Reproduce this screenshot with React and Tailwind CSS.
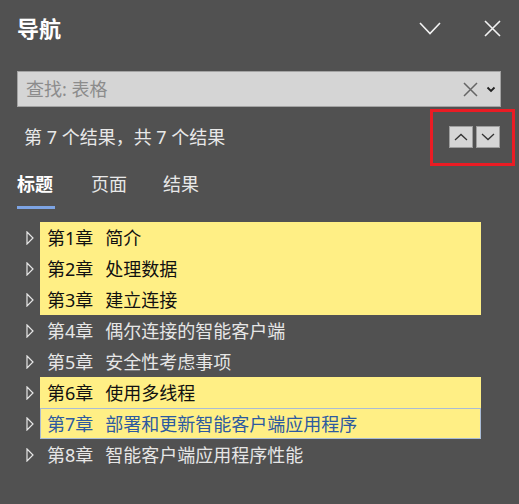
import React from 'react';

const FONT = { fontFamily: '"Segoe UI", "Noto Sans", "Noto Sans CJK SC", sans-serif' };

const chapters = [
  { num: '第1章', title: '简介', hit: true },
  { num: '第2章', title: '处理数据', hit: true },
  { num: '第3章', title: '建立连接', hit: true },
  { num: '第4章', title: '偶尔连接的智能客户端' },
  { num: '第5章', title: '安全性考虑事项' },
  { num: '第6章', title: '使用多线程', hit: true },
  { num: '第7章', title: '部署和更新智能客户端应用程序', hit: true, current: true },
  { num: '第8章', title: '智能客户端应用程序性能' },
];

function Caret() {
  return (
    <svg width="8" height="14" viewBox="0 0 8 14" className="block">
      <path d="M1 1 L7 7 L1 13 Z" fill="none" stroke="#e6e6e6" strokeWidth="1.2" strokeLinejoin="miter" />
    </svg>
  );
}

function Row({ num, title, hit, current }) {
  let box = 'text-[#e6e6e6]';
  if (hit) box = 'bg-[#ffef85] text-[#111]';
  if (current) box = 'bg-[#ffef85] text-[#2d5aa0] outline outline-1 outline-[#a9bcd6] -outline-offset-1';
  return (
    <div className="flex h-[31px] items-center">
      <div className="flex h-full w-[40px] items-center pl-[26px]">
        <Caret />
      </div>
      <div className={`flex h-full w-[441px] items-center pl-[7px] text-[18px] leading-none ${box}`}>
        <span>{num}</span>
        <span className="ml-[12px]">{title}</span>
      </div>
    </div>
  );
}

export default function App() {
  return (
    <div className="relative h-[504px] w-[519px] overflow-hidden bg-[#515151]" style={FONT}>
      {/* header */}
      <div className="flex h-[56px] items-center justify-between pl-[17px] pr-[18px]">
        <h1 className="text-[22px] font-bold leading-none text-white">导航</h1>
        <div className="flex items-center gap-[43px]">
          <svg width="22" height="13" viewBox="0 0 22 13">
            <path d="M1 1 L11 11.5 L21 1" fill="none" stroke="#f2f2f2" strokeWidth="1.6" />
          </svg>
          <svg width="17" height="17" viewBox="0 0 17 17">
            <path d="M1 1 L16 16 M16 1 L1 16" fill="none" stroke="#f2f2f2" strokeWidth="1.6" />
          </svg>
        </div>
      </div>

      {/* search */}
      <div className="mx-[17px] mt-[15px] flex h-[36px] w-[484px] items-center border border-[#a3a3a3] bg-[#d5d5d5] pl-[8px] pr-[4px]">
        <span className="flex-1 text-[18px] leading-none text-[#8c8c8c]">查找: 表格</span>
        <svg width="15" height="15" viewBox="0 0 15 15" className="mr-[8px]">
          <path d="M1 1 L14 14 M14 1 L1 14" fill="none" stroke="#666" strokeWidth="1.5" />
        </svg>
        <svg width="10" height="7" viewBox="0 0 10 7">
          <path d="M1.5 1.5 L5 5 L8.5 1.5" fill="none" stroke="#222" strokeWidth="1.8" />
        </svg>
      </div>

      {/* result count */}
      <div className="flex h-[60px] items-center justify-between pl-[24px] pr-[19px]">
        <span className="text-[18px] leading-none text-[#e8e8e8]">第 7 个结果，共 7 个结果</span>
        <div className="flex gap-[3px]">
          <button className="flex h-[22px] w-[24px] items-center justify-center border border-[#9e9e9e] bg-[#d6d6d6]">
            <svg width="14" height="8" viewBox="0 0 14 8">
              <path d="M1 7 L7 1.5 L13 7" fill="none" stroke="#333" strokeWidth="1.3" />
            </svg>
          </button>
          <button className="flex h-[22px] w-[24px] items-center justify-center border border-[#9e9e9e] bg-[#d6d6d6]">
            <svg width="14" height="8" viewBox="0 0 14 8">
              <path d="M1 1 L7 6.5 L13 1" fill="none" stroke="#333" strokeWidth="1.3" />
            </svg>
          </button>
        </div>
      </div>

      {/* tabs */}
      <div className="flex gap-[36px] pl-[17px] pt-[5px]">
        <div className="flex flex-col">
          <span className="text-[18px] font-bold leading-[24px] text-white">标题</span>
          <div className="mt-[10px] h-[3px] w-[38px] bg-[#7da4e4]" />
        </div>
        <span className="text-[18px] leading-[24px] text-[#e8e8e8]">页面</span>
        <span className="text-[18px] leading-[24px] text-[#e8e8e8]">结果</span>
      </div>

      {/* tree */}
      <div className="mt-[13px] flex flex-col">
        {chapters.map((c) => (
          <Row key={c.num} {...c} />
        ))}
      </div>

      {/* annotation highlight */}
      <div className="absolute left-[430px] top-[109px] h-[57px] w-[85px] border-[3px] border-[#ea1c24]" />
    </div>
  );
}
